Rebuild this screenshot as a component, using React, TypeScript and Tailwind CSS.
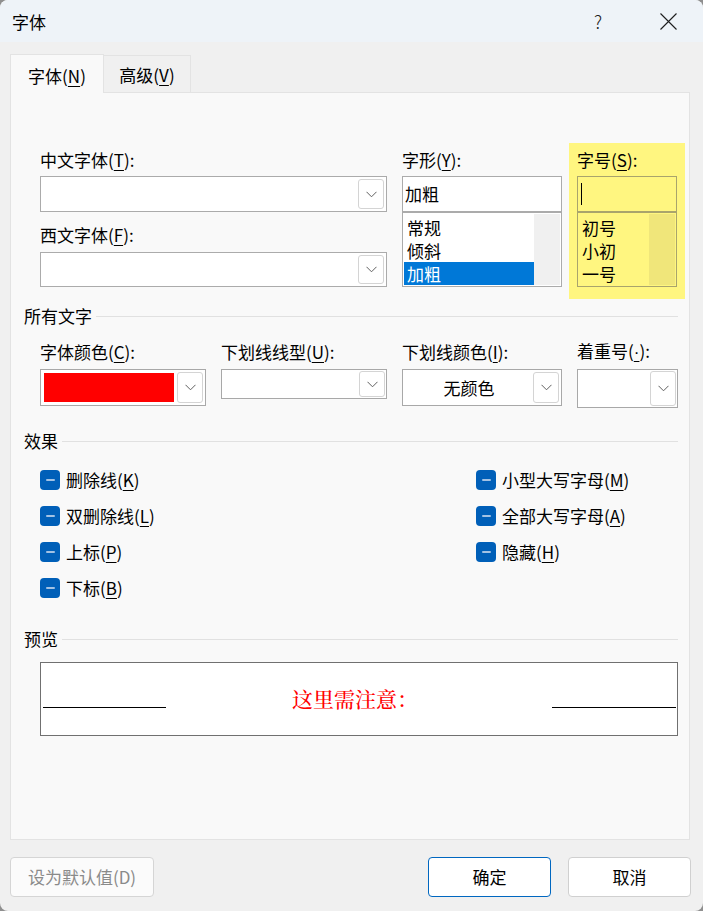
import React from 'react';

type LabelProps = { text: string; hot: React.ReactNode; suffix?: string };

const Label: React.FC<LabelProps> = ({ text, hot, suffix = ':' }) => (
  <span className="leading-[24px] whitespace-nowrap">
    {text}(<u className="underline-offset-[3px] decoration-1">{hot}</u>){suffix}
  </span>
);

const Chevron = () => (
  <svg width="11" height="7" viewBox="0 0 11 7" fill="none">
    <path d="M0.5 0.8L5.5 5.8L10.5 0.8" stroke="#606060" strokeWidth="1" />
  </svg>
);

const DropButton: React.FC<{ className?: string }> = ({ className = '' }) => (
  <div className={`w-[26px] shrink-0 flex items-center justify-center bg-white border border-[#d4d4d4] rounded-[3px] ${className}`}>
    <Chevron />
  </div>
);

const SectionHeader: React.FC<{ title: string; className?: string }> = ({ title, className = '' }) => (
  <div className={`flex items-center h-[24px] pl-[13px] pr-[11px] ${className}`}>
    <span className="leading-[24px]">{title}</span>
    <div className="flex-1 h-px bg-[#e1e1e1] ml-[4px]" />
  </div>
);

const Check: React.FC<{ text: string; hot: string }> = ({ text, hot }) => (
  <div className="flex items-center h-[36px] gap-[6px]">
    <div className="w-[20px] h-[20px] rounded-[4px] bg-[#005fb8] flex items-center justify-center">
      <div className="w-[9px] h-[2px] rounded-full bg-[#a3c2e4]" />
    </div>
    <span className="leading-[24px] whitespace-nowrap">
      {text}(<u className="underline-offset-[3px] decoration-1">{hot}</u>)
    </span>
  </div>
);

const App: React.FC = () => {
  return (
    <div className="w-[703px] h-[911px] bg-[#8f8f8f]">
      <div className="w-full h-full rounded-[8px] overflow-hidden bg-[#f0f0f0] flex flex-col text-[17px] text-black font-['Noto_Sans_CJK_SC',sans-serif]">
        {/* Title bar */}
        <div className="h-[42px] bg-[#eef3f8] flex items-center pl-[12px] shrink-0">
          <span className="leading-none">字体</span>
          <div className="ml-auto flex items-center h-full">
            <div className="w-[70px] h-full flex items-center justify-center font-light text-[18px] text-[#222]">?</div>
            <div className="w-[70px] h-full flex items-center justify-center">
              <svg width="17" height="17" viewBox="0 0 17 17" fill="none">
                <path d="M0.5 0.5L16.5 16.5M16.5 0.5L0.5 16.5" stroke="#1f1f1f" strokeWidth="1.1" />
              </svg>
            </div>
          </div>
        </div>

        {/* Body */}
        <div className="flex-1 flex flex-col pl-[10px] pr-[13px] pt-[12px]">
          {/* Tabs */}
          <div className="flex items-end h-[38px]">
            <div className="w-[94px] h-[39px] -mb-px relative z-10 bg-[#f9f9f9] border border-b-0 border-[#e3e3e3] flex items-center justify-center pt-[3px]">
              <Label text="字体" hot="N" suffix="" />
            </div>
            <div className="w-[87px] h-[37px] bg-[#f0f0f0] border border-l-0 border-b-0 border-[#e3e3e3] flex items-center justify-center pt-[2px]">
              <Label text="高级" hot="V" suffix="" />
            </div>
          </div>

          {/* Panel */}
          <div className="h-[748px] bg-[#f9f9f9] border border-[#e3e3e3] flex flex-col">
            {/* Font row */}
            <div className="flex items-start pl-[29px] mt-[50px]">
              <div className="w-[347px] flex flex-col">
                <div className="h-[33px] flex items-center"><Label text="中文字体" hot="T" /></div>
                <div className="h-[36px] bg-white border border-[#ababab] flex justify-end p-[2px]">
                  <DropButton />
                </div>
                <div className="h-[40px] pt-[6px] flex items-center"><Label text="西文字体" hot="F" /></div>
                <div className="h-[35px] bg-white border border-[#ababab] flex justify-end p-[2px]">
                  <DropButton />
                </div>
              </div>

              <div className="w-[160px] ml-[15px] flex flex-col">
                <div className="h-[33px] flex items-center"><Label text="字形" hot="Y" /></div>
                <div className="h-[36px] bg-white border border-[#ababab] flex items-center pl-[2px]">
                  <span className="leading-[24px]">加粗</span>
                </div>
                <div className="h-[75px] bg-white border border-[#ababab] flex">
                  <div className="flex-1 flex flex-col pt-[3px] pl-px">
                    <div className="h-[23px] flex items-center pl-[3px]">常规</div>
                    <div className="h-[23px] flex items-center pl-[3px]">倾斜</div>
                    <div className="h-[23px] flex items-center pl-[3px] bg-[#0078d7] text-white">加粗</div>
                  </div>
                  <div className="w-[26px] bg-[#f0f0f0] my-px mr-px" />
                </div>
              </div>

              <div className="w-[116px] ml-[7px] bg-[#fff680] px-[8px] pb-[12px] flex flex-col">
                <div className="h-[33px] flex items-center"><Label text="字号" hot="S" /></div>
                <div className="h-[36px] border border-[#a9a46c] flex items-center pl-[3px]">
                  <div className="w-px h-[22px] bg-black" />
                </div>
                <div className="h-[75px] border border-[#a9a46c] flex">
                  <div className="flex-1 flex flex-col pt-[3px] pl-[4px]">
                    <div className="h-[23px] flex items-center">初号</div>
                    <div className="h-[23px] flex items-center">小初</div>
                    <div className="h-[23px] flex items-center">一号</div>
                  </div>
                  <div className="w-[26px] bg-[#f0e67a] my-px mr-px" />
                </div>
              </div>
            </div>

            {/* All text */}
            <SectionHeader title="所有文字" className="mt-[5px]" />
            <div className="flex gap-[15px] pl-[29px] mt-[12px]">
              <div className="w-[166px] flex flex-col">
                <div className="h-[24px] flex items-center"><Label text="字体颜色" hot="C" /></div>
                <div className="mt-[5px] h-[37px] bg-white border border-[#a8a8a8] flex p-[2px] gap-[3px]">
                  <div className="flex-1 bg-[#ff0000] my-px ml-px" />
                  <DropButton />
                </div>
              </div>
              <div className="w-[166px] flex flex-col">
                <div className="h-[24px] flex items-center"><Label text="下划线线型" hot="U" /></div>
                <div className="mt-[5px] h-[30px] bg-white border border-[#a8a8a8] flex justify-end p-[1px]">
                  <DropButton />
                </div>
              </div>
              <div className="w-[160px] flex flex-col">
                <div className="h-[24px] flex items-center"><Label text="下划线颜色" hot="I" /></div>
                <div className="mt-[5px] h-[37px] bg-white border border-[#a8a8a8] flex p-[2px]">
                  <div className="flex-1 flex items-center justify-center">无颜色</div>
                  <DropButton />
                </div>
              </div>
              <div className="w-[101px] flex flex-col">
                <div className="h-[24px] flex items-center">
                  <Label text="着重号" hot={<span className="font-['Liberation_Sans',sans-serif]">·</span>} />
                </div>
                <div className="mt-[5px] h-[39px] bg-white border border-[#a8a8a8] flex justify-end p-[1px]">
                  <DropButton />
                </div>
              </div>
            </div>

            {/* Effects */}
            <SectionHeader title="效果" className="mt-[21px]" />
            <div className="flex pl-[29px] mt-[9px]">
              <div className="w-[436px] flex flex-col">
                <Check text="删除线" hot="K" />
                <Check text="双删除线" hot="L" />
                <Check text="上标" hot="P" />
                <Check text="下标" hot="B" />
              </div>
              <div className="flex flex-col">
                <Check text="小型大写字母" hot="M" />
                <Check text="全部大写字母" hot="A" />
                <Check text="隐藏" hot="H" />
              </div>
            </div>

            {/* Preview */}
            <SectionHeader title="预览" className="mt-[21px]" />
            <div className="mt-[11px] ml-[29px] mr-[11px] h-[74px] bg-white border border-[#707070] flex items-center px-px">
              <div className="w-[123px] h-px bg-black ml-px mt-[16px]" />
              <div className="flex-1 flex justify-center pr-[8px] mb-[2px]">
                <span className="text-[21px] leading-[24px] font-medium text-[#ff0000] font-['Noto_Serif_CJK_SC','Noto_Sans_CJK_SC',serif]">这里需注意：</span>
              </div>
              <div className="w-[124px] h-px bg-black mt-[16px]" />
            </div>
          </div>

          {/* Buttons */}
          <div className="flex items-center mt-[17px] -mr-px">
            <button className="w-[144px] h-[40px] bg-[#fbfbfb] border border-[#d5d5d5] rounded-[4px] text-[#8a8a8a]">
              设为默认值(D)
            </button>
            <button className="ml-auto w-[123px] h-[40px] bg-white border border-[#0067c0] rounded-[4px]">
              确定
            </button>
            <button className="ml-[17px] w-[123px] h-[40px] bg-white border border-[#d0d0d0] rounded-[4px]">
              取消
            </button>
          </div>
        </div>
      </div>
    </div>
  );
};

export default App;
